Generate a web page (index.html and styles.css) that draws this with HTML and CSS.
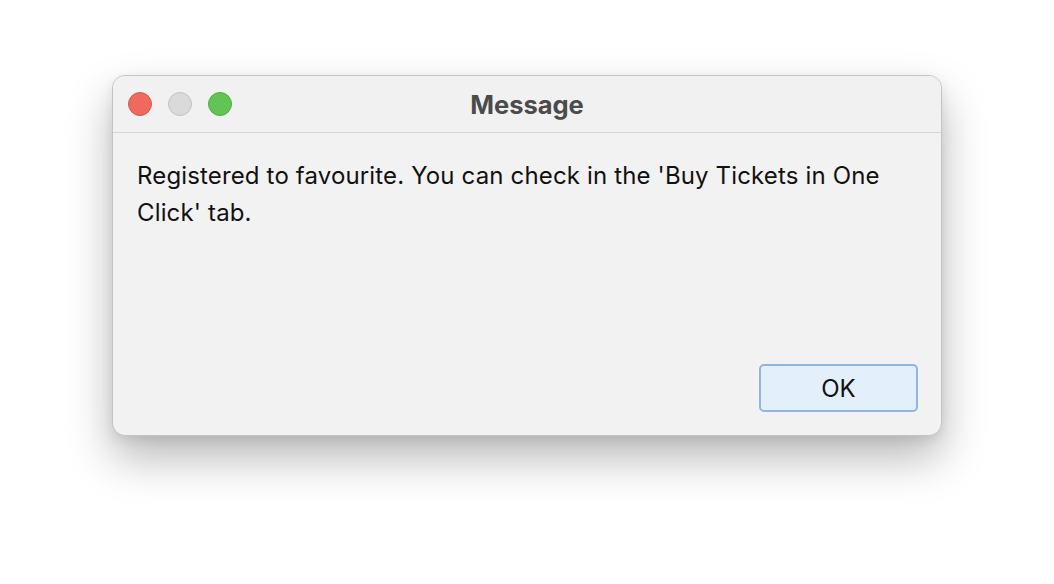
FILE: index.html
```html
<!DOCTYPE html>
<html>
<head>
<meta charset="utf-8">
<link rel="stylesheet" href="styles.css">
</head>
<body>
<div class="window">
  <div class="titlebar">
    <div class="lights">
      <span class="light red"></span>
      <span class="light gray"></span>
      <span class="light green"></span>
    </div>
    <div class="title">Message</div>
  </div>
  <div class="content">
    <p class="message">Registered to favourite. You can check in the 'Buy Tickets in One<br>Click' tab.</p>
    <div class="actions">
      <button class="ok">OK</button>
    </div>
  </div>
</div>
</body>
</html>
```
FILE: styles.css
```css
html, body {
  margin: 0;
  padding: 0;
  background: #ffffff;
}
body {
  width: 1054px;
  height: 584px;
  padding: 75px 0 0 112px;
  box-sizing: border-box;
  font-family: "Inter", "Liberation Sans", sans-serif;
}
.window {
  width: 830px;
  height: 361px;
  box-sizing: border-box;
  background: #f2f2f2;
  border-radius: 13px;
  border: 1px solid #c4c4c4;
  box-shadow: 0 22px 45px rgba(0,0,0,0.28), 0 4px 12px rgba(0,0,0,0.08);
  display: flex;
  flex-direction: column;
  overflow: hidden;
}
.titlebar {
  height: 56px;
  flex: none;
  border-bottom: 1px solid #d6d6d6;
  display: grid;
  grid-template-columns: 1fr auto 1fr;
  align-items: center;
  background: #f1f1f1;
}
.lights {
  display: flex;
  gap: 16px;
  padding-left: 15px;
}
.light {
  width: 24px;
  height: 24px;
  border-radius: 50%;
  box-sizing: border-box;
}
.red { background: #ee6a5e; border: 1px solid #d55a4f; }
.gray { background: #dadada; border: 1px solid #c3c3c3; }
.green { background: #61c454; border: 1px solid #52ab45; }
.title {
  font-weight: 700;
  font-size: 25.5px;
  color: #4b4b4b;
}
.content {
  flex: 1;
  display: flex;
  flex-direction: column;
  padding: 24px 23px 23px 24px;
}
.message {
  margin: 0;
  font-size: 24px;
  line-height: 37px;
  color: #111111;
  letter-spacing: 0.15px;
}
.actions {
  margin-top: auto;
  display: flex;
  justify-content: flex-end;
}
.ok {
  width: 159px;
  height: 48px;
  box-sizing: border-box;
  border: 2px solid #8fb5e2;
  border-radius: 5px;
  background: #e3f0fb;
  font-family: "Inter", "Liberation Sans", sans-serif;
  font-size: 24px;
  color: #111111;
  padding: 0;
}
```
